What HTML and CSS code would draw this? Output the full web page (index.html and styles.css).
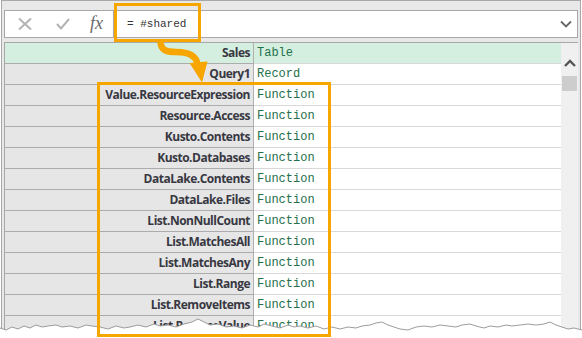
FILE: index.html
```html
<!DOCTYPE html>
<html lang="en">
<head>
    <meta charset="UTF-8">
    <title>#shared</title>
    <link rel="stylesheet" href="styles.css">
</head>
<body>
    <div class="page">
        <div class="frame">
            <!-- formula bar -->
            <div class="formula-bar">
                <div class="fb-tools">
                    <svg class="fb-icon" width="14" height="12" viewBox="0 0 14 12">
                        <path d="M1 0.5 L13 11.5 M13 0.5 L1 11.5" stroke="#b3b3b3" stroke-width="2" fill="none"/>
                    </svg>
                    <svg class="fb-icon fb-check" width="14" height="12" viewBox="0 0 14 12">
                        <path d="M1 6 L5 10.5 L13 1" stroke="#b3b3b3" stroke-width="2" fill="none"/>
                    </svg>
                    <span class="fx">fx</span>
                </div>
                <div class="fb-input">= #shared</div>
                <svg class="fb-drop" width="12" height="8" viewBox="0 0 12 8">
                    <path d="M1 1.5 L6 6.5 L11 1.5" stroke="#666" stroke-width="1.8" fill="none"/>
                </svg>
            </div>

            <!-- result grid -->
            <div class="grid">
                <div class="rows">
                    <div class="row row-selected"><div class="name">Sales</div><div class="value">Table</div></div>
                    <div class="row"><div class="name">Query1</div><div class="value">Record</div></div>
                    <div class="row"><div class="name">Value.ResourceExpression</div><div class="value">Function</div></div>
                    <div class="row"><div class="name">Resource.Access</div><div class="value">Function</div></div>
                    <div class="row"><div class="name">Kusto.Contents</div><div class="value">Function</div></div>
                    <div class="row"><div class="name">Kusto.Databases</div><div class="value">Function</div></div>
                    <div class="row"><div class="name">DataLake.Contents</div><div class="value">Function</div></div>
                    <div class="row"><div class="name">DataLake.Files</div><div class="value">Function</div></div>
                    <div class="row"><div class="name">List.NonNullCount</div><div class="value">Function</div></div>
                    <div class="row"><div class="name">List.MatchesAll</div><div class="value">Function</div></div>
                    <div class="row"><div class="name">List.MatchesAny</div><div class="value">Function</div></div>
                    <div class="row"><div class="name">List.Range</div><div class="value">Function</div></div>
                    <div class="row"><div class="name">List.RemoveItems</div><div class="value">Function</div></div>
                    <div class="row"><div class="name">List.ReplaceValue</div><div class="value">Function</div></div>
                </div>
                <div class="scrollbar">
                    <svg width="12" height="8" viewBox="0 0 12 8">
                        <path d="M1 7 L6 2 L11 7" stroke="#555" stroke-width="2.4" fill="none"/>
                    </svg>
                    <div class="thumb"></div>
                </div>
            </div>
        </div>

        <!-- torn edge + callouts drawn over the screenshot -->
        <svg class="overlay" width="582" height="338" viewBox="0 0 582 338">
            <path d="M0,328 L6,330 L12,327 L18,329 L24,326 L30,328 L36,325 L42,327 L48,326 L56,325 L62,327 L70,326 L78,328 L86,325 L92,326 L100,327 L108,329 L116,326 L124,328 L130,327 L138,325 L146,327 L154,324 L160,326 L168,325 L176,327 L184,324 L192,322 L198,319 L204,322 L210,325 L218,324 L226,327 L234,326 L242,328 L250,325 L258,327 L264,324 L272,326 L280,328 L288,325 L294,327 L300,326 L308,328 L316,326 L324,329 L332,327 L340,329 L348,327 L356,328 L362,326 L370,325 L376,323 L382,322 L388,325 L394,327 L400,329 L408,330 L416,327 L424,326 L432,327 L440,325 L448,326 L456,327 L462,325 L470,324 L476,326 L484,328 L490,326 L498,327 L506,325 L512,326 L520,325 L528,324 L536,325 L544,324 L550,322 L556,325 L562,327 L568,329 L574,328 L582,330 L582,338 L0,338 Z" fill="#fff"/>
            <path d="M0,328 L6,330 L12,327 L18,329 L24,326 L30,328 L36,325 L42,327 L48,326 L56,325 L62,327 L70,326 L78,328 L86,325 L92,326 L100,327 L108,329 L116,326 L124,328 L130,327 L138,325 L146,327 L154,324 L160,326 L168,325 L176,327 L184,324 L192,322 L198,319 L204,322 L210,325 L218,324 L226,327 L234,326 L242,328 L250,325 L258,327 L264,324 L272,326 L280,328 L288,325 L294,327 L300,326 L308,328 L316,326 L324,329 L332,327 L340,329 L348,327 L356,328 L362,326 L370,325 L376,323 L382,322 L388,325 L394,327 L400,329 L408,330 L416,327 L424,326 L432,327 L440,325 L448,326 L456,327 L462,325 L470,324 L476,326 L484,328 L490,326 L498,327 L506,325 L512,326 L520,325 L528,324 L536,325 L544,324 L550,322 L556,325 L562,327 L568,329 L574,328 L582,330" fill="none" stroke="#9c9c9c" stroke-width="1"/>

            <rect x="115.5" y="4.5" width="84" height="36" fill="none" stroke="#f7a600" stroke-width="3"/>
            <rect x="98.5" y="83.5" width="231" height="252" fill="none" stroke="#f7a600" stroke-width="3"/>
            <path d="M160.5,41 C160.5,50 166,52 176,52 C188,52 196,55 197.5,64" fill="none" stroke="#f7a600" stroke-width="6.5"/>
            <polygon points="189.5,63 207.5,61.5 202,82.5" fill="#f7a600"/>
        </svg>
    </div>
</body>
</html>
```

FILE: styles.css
```css
* {
    box-sizing: border-box;
    margin: 0;
    padding: 0;
}

body {
    background-color: #fff;
    font-family: "Open Sans", Arial, sans-serif;
}

.page {
    position: relative;
    width: 582px;
    height: 338px;
    overflow: hidden;
}

.frame {
    width: 580px;
    height: 338px;
    margin-left: 1px;
    padding: 9px 2px 0 2px;
    background-color: #e8e8e8;
    border: 1px solid #a8a8a8;
    border-bottom: none;
    overflow: hidden;
}

/* formula bar */
.formula-bar {
    display: flex;
    align-items: center;
    height: 28px;
    background-color: #fff;
    border: 1px solid #a8a8a8;
}

.fb-tools {
    display: flex;
    align-items: center;
    width: 109px;
    height: 100%;
    padding-left: 13px;
    border-right: 1px solid #a8a8a8;
}

.fb-check {
    margin-left: 24px;
}

.fx {
    margin-left: 20px;
    font-family: "Liberation Serif", serif;
    font-style: italic;
    font-size: 18px;
    color: #6a6a6a;
    line-height: 1;
    position: relative;
    top: -1px;
}

.fb-input {
    flex: 1;
    padding-left: 13px;
    font-family: "Liberation Mono", monospace;
    font-size: 11px;
    color: #333;
}

.fb-drop {
    margin-right: 5px;
}

/* grid */
.grid {
    display: flex;
    height: 296px;
    margin-top: 4px;
    border-left: 1px solid #a8a8a8;
    border-top: 1px solid #a8a8a8;
}

.rows {
    flex: 1;
    background-color: #fff;
    overflow: hidden;
}

.row {
    display: flex;
    height: 21px;
}

.name {
    width: 249px;
    padding-right: 3px;
    background-color: #e6e6e6;
    border-right: 1px solid #b0b0b0;
    border-bottom: 1px solid #acacac;
    text-align: right;
    font-weight: 700;
    font-size: 12px;
    letter-spacing: -0.5px;
    line-height: 20px;
    color: #383842;
}

.value {
    flex: 1;
    padding-left: 3px;
    border-bottom: 1px solid #d9d9d9;
    font-family: "Liberation Mono", monospace;
    font-size: 12px;
    line-height: 21px;
    color: #23704a;
}

.row-selected .name,
.row-selected .value {
    background-color: #d4efdf;
}

.scrollbar {
    display: flex;
    flex-direction: column;
    align-items: center;
    width: 17px;
    padding-top: 16px;
    background-color: #f0f0f0;
}

.thumb {
    width: 15px;
    height: 15px;
    margin-top: 9px;
    background-color: #cdcdcd;
}

.overlay {
    position: absolute;
    left: 0;
    top: 0;
    pointer-events: none;
}
```
